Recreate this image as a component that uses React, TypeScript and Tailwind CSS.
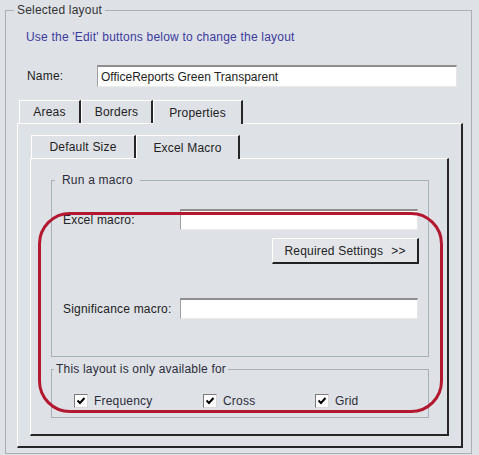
import React from 'react';

const bg = 'bg-[#dee1e6]';

function Tab({ label, w, active }: { label: string; w: string; active?: boolean }) {
  return (
    <div
      className={`${w} ${
        active ? 'relative z-10 -mb-px h-[24px] ' + bg : 'h-[23px]'
      } flex items-center justify-center border-l border-t border-white border-r-2 border-r-[#262626] text-[#222]`}
    >
      {label}
    </div>
  );
}

function TextBox({ value, w, h }: { value?: string; w: string; h: string }) {
  return (
    <div
      className={`${w} ${h} flex items-center bg-white border-t-2 border-t-[#8e8e8e] border-l border-l-[#a0a0a0] border-r border-b border-r-[#e6e6e6] border-b-[#ececec] px-[3px] tracking-normal text-[#222]`}
    >
      {value}
    </div>
  );
}

function Check({ label, w }: { label: string; w: string }) {
  return (
    <div className={`${w} flex items-center`}>
      <div className="w-[14px] h-[14px] bg-white border-t border-l border-[#7a7a7a] border-r border-b border-r-[#d8d8d8] border-b-[#d8d8d8] flex items-center justify-center">
        <svg width="10" height="10" viewBox="0 0 10 10">
          <polyline points="1.5,4.5 4,7 8.5,2" fill="none" stroke="#000" strokeWidth="2" />
        </svg>
      </div>
      <span className="ml-[6px] text-[#2c2c3a]">{label}</span>
    </div>
  );
}

export default function App() {
  return (
    <div
      className={`relative w-[479px] h-[455px] overflow-hidden ${bg} text-[12px] leading-[14px] tracking-[0.2px]`}
      style={{ fontFamily: '"Liberation Sans", Arial, sans-serif' }}
    >
      <fieldset className="mt-[3px] ml-[5px] w-[467px] h-[451px] border border-[#a9b0ba]">
        <legend className="ml-[8px] px-[3px] leading-[14px] text-[#333]">Selected layout</legend>

        <div className="mt-[13px] ml-[20px] text-[#3b3b9e]">Use the 'Edit' buttons below to change the layout</div>

        <div className="mt-[21px] ml-[21px] flex items-center">
          <div className="w-[70px] text-[#222]">Name:</div>
          <TextBox value="OfficeReports Green Transparent" w="w-[360px]" h="h-[22px]" />
        </div>

        {/* outer tabs */}
        <div className="mt-[13px] ml-[13px] flex items-end">
          <Tab label="Areas" w="w-[62px]" />
          <Tab label="Borders" w="w-[72px]" />
          <Tab label="Properties" w="w-[90px]" active />
        </div>
        <div className="ml-[11px] w-[446px] h-[325px] border-l border-t border-white border-r-2 border-b-2 border-r-[#262626] border-b-[#262626]">
          {/* inner tabs */}
          <div className="mt-[11px] ml-[13px] flex items-end">
            <Tab label="Default Size" w="w-[105px]" />
            <Tab label="Excel Macro" w="w-[104px]" active />
          </div>
          <div className="ml-[12px] w-[419px] h-[278px] border-l border-t border-white border-r-2 border-b-2 border-r-[#262626] border-b-[#262626]">
            <fieldset className="mt-[14px] ml-[20px] w-[378px] pb-[37px] border border-[#a9b0ba]">
              <legend className="ml-[3px] px-[7px] leading-[14px] text-[#2c2c3a]">Run a macro</legend>
              <div className="mt-[22px] ml-[11px] flex items-center">
                <div className="w-[117px] text-[#222]">Excel macro:</div>
                <TextBox w="w-[238px]" h="h-[21px]" />
              </div>
              <div className="mt-[8px] ml-[11px] w-[356px] flex justify-end">
                <div className="w-[147px] h-[26px] flex items-center justify-center bg-[#e3e5e9] border-l border-t border-white border-r-2 border-b-2 border-r-[#222] border-b-[#222] text-[#222]">
                  Required Settings<span className="ml-[8px]">&gt;&gt;</span>
                </div>
              </div>
              <div className="mt-[34px] ml-[11px] flex items-center">
                <div className="w-[117px] text-[#222]">Significance macro:</div>
                <TextBox w="w-[238px]" h="h-[21px]" />
              </div>
            </fieldset>

            <fieldset className="mt-[5px] ml-[20px] w-[378px] pb-[9px] border border-[#a9b0ba]">
              <legend className="ml-[2px] px-[2px] leading-[14px] text-[#2c2c3a]">This layout is only available for</legend>
              <div className="mt-[18px] ml-[22px] flex items-center">
                <Check label="Frequency" w="w-[129px]" />
                <Check label="Cross" w="w-[112px]" />
                <Check label="Grid" w="w-[100px]" />
              </div>
            </fieldset>
          </div>
        </div>
      </fieldset>

      {/* highlight drawn over the dialog */}
      <div className="pointer-events-none absolute left-[38px] top-[212px] w-[405px] h-[201px] rounded-[32px] border-[3px] border-[#b3182f]" />
    </div>
  );
}
